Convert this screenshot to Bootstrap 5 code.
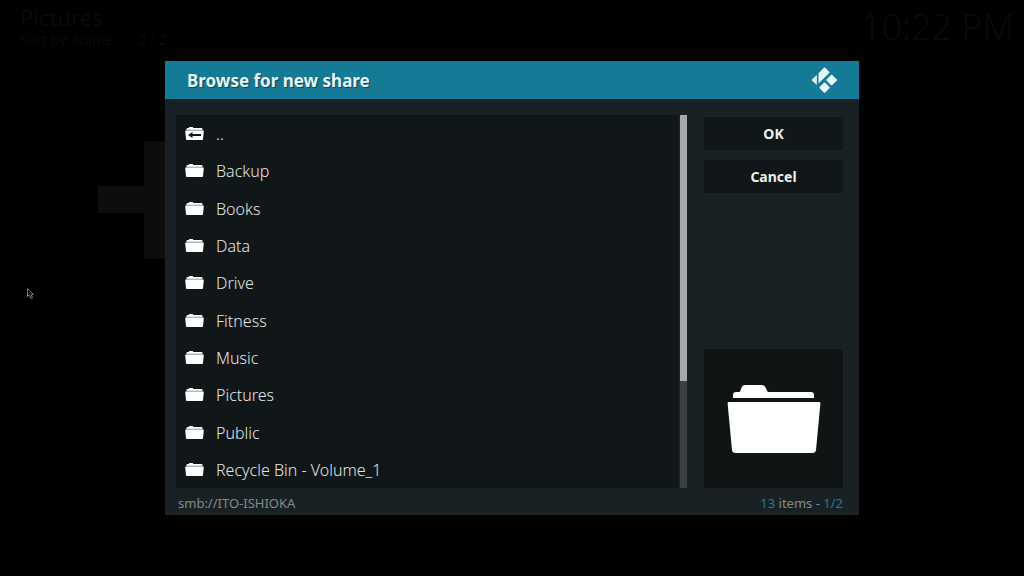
<!DOCTYPE html>
<html lang="en">
<head>
<meta charset="utf-8">
<meta name="viewport" content="width=device-width, initial-scale=1">
<title>Browse for new share</title>
<link href="https://cdn.jsdelivr.net/npm/bootstrap@5.3.0/dist/css/bootstrap.min.css" rel="stylesheet">
<style>
  body { background: #000; color: #dcdedf; font-family: "Noto Sans", sans-serif; font-size: 16px; line-height: 24px; }
  .backdrop-bar { color: #0a0a0a; padding: 4px 10px 0 20px; top: 0; left: 0; }
  .backdrop-bar h1 { font-size: 22px; line-height: 26px; font-weight: 400; }
  .backdrop-bar p { font-size: 14px; line-height: 20px; white-space: pre; }
  .clock { font-size: 36px; line-height: 46px; font-weight: 300; }
  .add-tile { left: 98px; top: 141px; }
  .pointer { left: 26px; top: 287px; }
  .browse-dialog { width: 694px; background: #1a2124; }
  .dialog-head { background: #147a96; height: 38px; padding: 0 20px 0 22px; }
  .dialog-head h2 { font-size: 17px; line-height: 24px; padding-top: 2px; font-weight: 700; color: #e9f6fa; text-shadow: 1px 1px 1px #0b4556; }
  .dialog-main { padding: 16px 16px 0 11px; }
  .file-list { height: 373px; background: #111618; }
  .file-list a { color: #e4e6e7; padding: 1px 9px 0; gap: 12px; font-weight: 300; }
  .file-list svg { width: 19px; height: 16px; }
  .scroll-track { width: 7px; margin: 0 17px 0 2px; background: #3b4042; }
  .scroll-thumb { height: 266px; background: #a5a7a8; }
  .side { width: 139px; padding-top: 2px; gap: 10px; }
  .side button { height: 33px; background: #111618; color: #eceeef; font-size: 14px; line-height: 20px; font-weight: 700; border: 0; }
  .preview { height: 139px; background: #101415; }
  .dialog-foot { height: 27px; padding: 3px 16px 0 13px; font-size: 13px; line-height: 24px; color: #85898b; }
  .accent { color: #1b7d97; }
</style>
</head>
<body class="overflow-hidden">
<svg class="d-none" aria-hidden="true">
  <symbol id="folder" viewBox="0 0 19 16">
    <path fill="#fff" d="M1.500 4V3q0-1 1-1h1l1-1h3l1 1h8q1 0 1 1v1z"/>
    <path fill="#8f9293" d="M1.500 3.700h16v1h-16z"/>
    <path fill="#fff" d="M.7 4.500h17.600q.6 0 .5.700l-.8 8q-.1.800-.9.800H1.900q-.8 0-.9-.8L.2 5.200Q.1 4.500.7 4.500z"/>
  </symbol>
  <symbol id="folder-up" viewBox="0 0 19 16">
    <use href="#folder"/>
    <path fill="#111618" d="M3 9l4.500-3v2.100h8.500v1.800H7.500V12z"/>
  </symbol>
</svg>

<header class="backdrop-bar position-absolute w-100 d-flex justify-content-between">
  <div>
    <h1 class="m-0">Pictures</h1>
    <p class="m-0">Sort by: Name   ·   2 / 2</p>
  </div>
  <div class="clock">10:22 PM</div>
</header>
<svg class="add-tile position-absolute" width="118" height="118" aria-hidden="true"><path fill="#0d0d0d" d="M46 0h27v45h45v27H73v46H46V72H0V45h46z"/></svg>
<svg class="pointer position-absolute" width="10" height="13" aria-hidden="true"><path fill="#000" stroke="#777" d="M1.500 1.500v8l2-1.500 1.500 3.500 1.500-.7-1.400-3.300h2.500z"/></svg>

<main class="min-vh-100 d-flex align-items-center justify-content-center">
  <section class="browse-dialog position-relative" aria-labelledby="dialog-title">
    <div class="dialog-head d-flex align-items-center justify-content-between">
      <h2 id="dialog-title" class="m-0">Browse for new share</h2>
      <svg width="28" height="28" viewBox="0 0 28 28" role="img" aria-label="Kodi">
        <g fill="#e9f9fd">
          <path d="M5.800 9v10L1 14.700q-.7-.7 0-1.400z"/>
          <path d="M7.500 17.600V8q0-.6.4-1l4.900-5.300q.7-.6 1.400 0l4 4q.6.600 0 1.200z"/>
          <path d="M15.500 13.400l4.400-4.400q.7-.6 1.400 0l4.600 4.400q.6.600 0 1.200l-4.600 4.400q-.7.600-1.400 0l-4.400-4.400q-.6-.6 0-1.200z"/>
          <path d="M8.600 21l4.200-4.300q.7-.6 1.400 0l4.200 4.300q.6.600 0 1.200l-4.200 4.300q-.7.600-1.400 0l-4.200-4.300q-.6-.6 0-1.200z"/>
        </g>
      </svg>
    </div>
    <div class="dialog-main d-flex">
      <nav class="file-list flex-fill d-flex flex-column" aria-label="Folders">
        <a class="flex-fill d-flex align-items-center text-decoration-none" href="#"><svg><use href="#folder-up"/></svg>..</a>
        <a class="flex-fill d-flex align-items-center text-decoration-none" href="#"><svg><use href="#folder"/></svg>Backup</a>
        <a class="flex-fill d-flex align-items-center text-decoration-none" href="#"><svg><use href="#folder"/></svg>Books</a>
        <a class="flex-fill d-flex align-items-center text-decoration-none" href="#"><svg><use href="#folder"/></svg>Data</a>
        <a class="flex-fill d-flex align-items-center text-decoration-none" href="#"><svg><use href="#folder"/></svg>Drive</a>
        <a class="flex-fill d-flex align-items-center text-decoration-none" href="#"><svg><use href="#folder"/></svg>Fitness</a>
        <a class="flex-fill d-flex align-items-center text-decoration-none" href="#"><svg><use href="#folder"/></svg>Music</a>
        <a class="flex-fill d-flex align-items-center text-decoration-none" href="#"><svg><use href="#folder"/></svg>Pictures</a>
        <a class="flex-fill d-flex align-items-center text-decoration-none" href="#"><svg><use href="#folder"/></svg>Public</a>
        <a class="flex-fill d-flex align-items-center text-decoration-none" href="#"><svg><use href="#folder"/></svg>Recycle Bin - Volume_1</a>
      </nav>
      <div class="scroll-track"><div class="scroll-thumb"></div></div>
      <div class="side d-flex flex-column">
        <button type="button" class="w-100">OK</button>
        <button type="button" class="w-100">Cancel</button>
        <div class="preview mt-auto d-flex align-items-center justify-content-center">
          <svg width="94" height="70" viewBox="0 0 94 70" role="img" aria-label="Folder">
            <path fill="#fff" d="M6 14v-3q0-3 3-3h3q1 0 1.500-1.500l1.500-4Q16 1 18 1h17q2 0 3 1.500l2 4Q40.500 8 42 8h42q3 0 3 3v3zM2 18h90q1.500 0 1.400 1.500L89 66q-.3 3-3.500 3h-77Q5.300 69 5 66L.6 19.500Q.5 18 2 18z"/>
          </svg>
        </div>
      </div>
    </div>
    <footer class="dialog-foot d-flex justify-content-between">
      <span>smb://ITO-ISHIOKA</span>
      <span><span class="accent">13</span> items - <span class="accent">1/2</span></span>
    </footer>
  </section>
</main>
<script src="https://cdn.jsdelivr.net/npm/bootstrap@5.3.0/dist/js/bootstrap.bundle.min.js"></script>
</body>
</html>
